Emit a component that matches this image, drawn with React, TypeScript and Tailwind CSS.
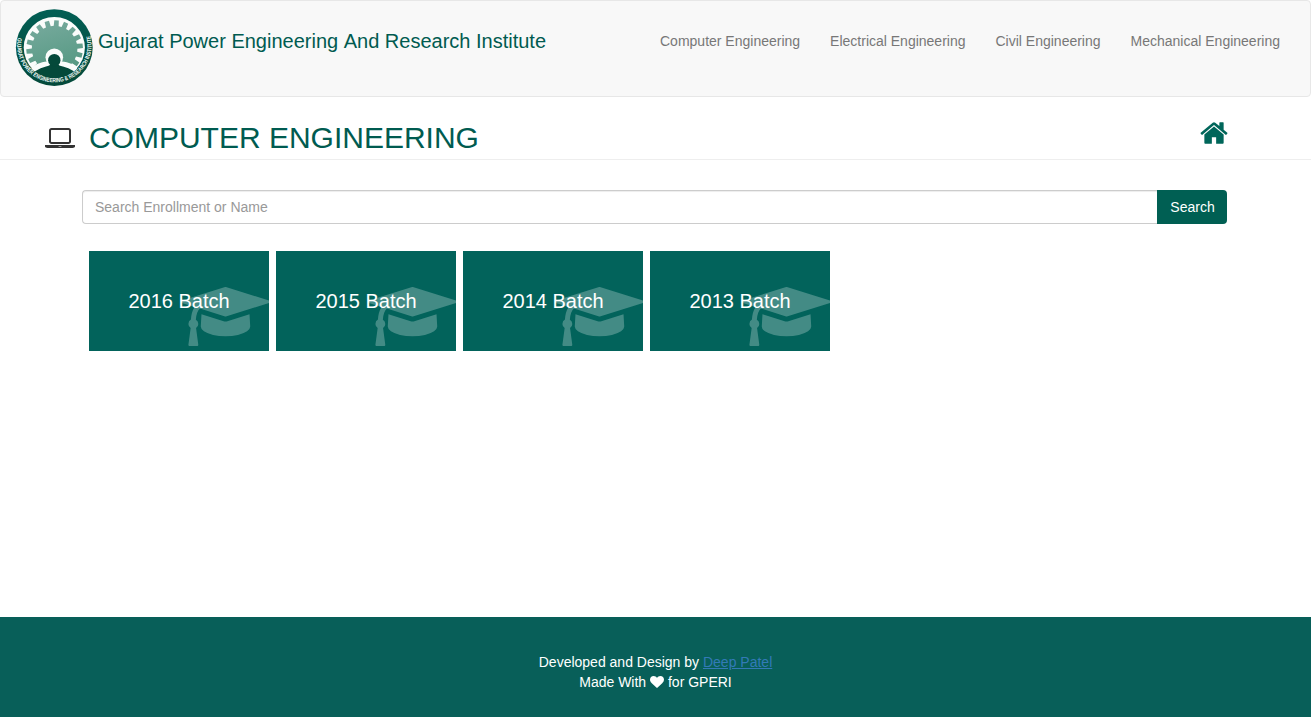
import React from "react";

const GREEN = "#00665a";

function gearPath(cx: number, cy: number, teeth: number, inner: number, outer: number, offset: number) {
  const step = 360 / teeth;
  const at = (r: number, deg: number) => {
    const a = ((deg - 90) * Math.PI) / 180;
    return `${(cx + r * Math.cos(a)).toFixed(2)} ${(cy + r * Math.sin(a)).toFixed(2)}`;
  };
  const points: string[] = [];
  for (let i = 0; i < teeth; i++) {
    const a = offset + i * step;
    points.push(at(inner, a - 6.2), at(outer, a - 4.6), at(outer, a + 4.6), at(inner, a + 6.2));
  }
  return `M${points.join("L")}Z`;
}

function Logo() {
  return (
    <svg viewBox="0 0 78 78" className="block h-[78px] w-[78px] overflow-visible" aria-label="GPERI">
      <defs>
        <linearGradient id="gear" x1="0" y1="0" x2="0.3" y2="1">
          <stop offset="0" stopColor="#79ab9f" />
          <stop offset="1" stopColor="#569983" />
        </linearGradient>
        <linearGradient id="ring" x1="0" y1="0" x2="0" y2="1">
          <stop offset="0" stopColor="#025f55" />
          <stop offset="1" stopColor="#04493a" />
        </linearGradient>
        <clipPath id="disc">
          <circle cx="39.3" cy="38.6" r="31" />
        </clipPath>
        <path id="rim" d="M3.4 26.4A37.2 37.2 0 1 0 75.2 26.4" />
      </defs>
      <circle cx="39.3" cy="38.6" r="38.4" fill="url(#ring)" />
      <circle cx="39.3" cy="38.6" r="30.6" fill="#fafcfb" />
      <g clipPath="url(#disc)">
        <path d={gearPath(39.6, 39.6, 18, 22.8, 28.4, 4)} fill="url(#gear)" />
        <path d="M8 66L21 55.5Q31 51 35 53L44 53Q48 51 58 55.5L71 66L60 78H14Z" fill="#fafcfb" />
        <circle cx="39.3" cy="48.3" r="8.8" fill="#fafcfb" />
        <path d="M12 70Q20 60 31 57.5Q35 57 36 54H42.5Q43.5 57 48 57.5Q59 60 67 70V78H12Z" fill="#04493a" />
      </g>
      <circle cx="39.3" cy="51.2" r="6.2" fill="#04493a" />
      <text
        fill="#f3faf7"
        fontSize="6"
        fontWeight="700"
        fontFamily="Liberation Sans, Arial, sans-serif"
      >
        <textPath href="#rim" startOffset="2.5" textLength="133.5" lengthAdjust="spacingAndGlyphs">
          GUJARAT POWER ENGINEERING &amp; RESEARCH INSTITUTE
        </textPath>
      </text>
    </svg>
  );
}

function LaptopIcon() {
  return (
    <svg viewBox="0 0 1920 1792" className="h-7 w-[30px]" fill="#333">
      <path d="M416 1280q-66 0-113-47t-47-113v-704q0-66 47-113t113-47h1088q66 0 113 47t47 113v704q0 66-47 113t-113 47h-1088zm-32-864v704q0 13 9.5 22.5t22.5 9.5h1088q13 0 22.5-9.5t9.5-22.5v-704q0-13-9.5-22.5t-22.5-9.5h-1088q-13 0-22.5 9.5t-9.5 22.5zm1376 928h160v96q0 40-47 68t-113 28h-1600q-66 0-113-28t-47-68v-96h1760zm-720 96q16 0 16-16t-16-16h-160q-16 0-16 16t16 16h160z" />
    </svg>
  );
}

function HomeIcon() {
  return (
    <svg viewBox="0 0 1792 1792" className="h-[30px] w-[30px]" fill={GREEN}>
      <path d="M1472 992v480q0 26-19 45t-45 19h-384v-384h-256v384h-384q-26 0-45-19t-19-45v-480q0-1 .5-3t.5-3l575-474 575 474q1 2 1 6zm223-69l-62 74q-8 9-21 11h-3q-13 0-21-7l-692-577-692 577q-12 8-24 7-13-2-21-11l-62-74q-8-10-7-23.5t11-21.5l719-599q32-26 76-26t76 26l244 204v-195q0-14 9-23t23-9h192q14 0 23 9t9 23v408l219 182q10 8 11 21.5t-7 23.5z" />
    </svg>
  );
}

function CapIcon() {
  return (
    <svg
      viewBox="0 0 2304 1792"
      preserveAspectRatio="none"
      className="absolute top-[31px] left-[92px] h-[69px] w-[89px]"
      fill="#fff"
      fillOpacity="0.26"
    >
      <path d="M1774 836l18 316q4 69-82 128t-235 93.5-323 34.5-323-34.5-235-93.5-82-128l18-316 574 181q22 7 48 7t48-7zm530-324q0 23-22 31l-1120 352q-4 1-10 1t-10-1l-652-206q-43 34-71 111.5t-34 178.5q63 36 63 109 0 69-58 107l58 433q2 14-8 25-9 11-24 11h-192q-15 0-24-11-10-11-8-25l58-433q-58-38-58-107 0-73 65-111 11-207 98-330l-333-104q-22-8-22-31t22-31l1120-352q4-1 10-1t10 1l1120 352q22 8 22 31z" />
    </svg>
  );
}

function HeartIcon() {
  return (
    <svg viewBox="0 0 1792 1792" className="inline-block h-[14px] w-[14px] align-[-2px]" fill="#fff">
      <path d="M896 1664q-26 0-44-18l-624-602q-10-8-27.5-26t-55.5-65.5-68-97.5-53.5-121-23.5-138q0-220 127-344t351-124q62 0 126.5 21.5t120 58 95.5 68.5 76 68q36-36 76-68t95.5-68.5 120-58 126.5-21.5q224 0 351 124t127 344q0 221-229 450l-623 600q-18 18-44 18z" />
    </svg>
  );
}

const departments = [
  "Computer Engineering",
  "Electrical Engineering",
  "Civil Engineering",
  "Mechanical Engineering",
];

const batches = ["2016 Batch", "2015 Batch", "2014 Batch", "2013 Batch"];

export default function App() {
  return (
    <div className="flex min-h-screen flex-col bg-white font-['Liberation_Sans',Arial,sans-serif] text-sm leading-5 text-[#333]">
      <nav className="flex h-[97px] items-start justify-between rounded border border-[#e7e7e7] bg-[#f8f8f8] pr-[15px] pl-[14px]">
        <div className="flex items-start">
          <div className="pt-2">
            <Logo />
          </div>
          <span className="ml-[5px] pt-[30px] text-xl leading-5 text-[#005b50]">
            Gujarat Power Engineering&nbsp;And Research Institute
          </span>
        </div>
        <ul className="flex pt-[15px]">
          {departments.map((name) => (
            <li key={name} className="p-[15px] text-[#777]">
              {name}
            </li>
          ))}
        </ul>
      </nav>

      <header className="flex h-[63px] items-start justify-between border-b border-[#eee] pr-[82px] pl-[45px]">
        <div className="flex items-start">
          <div className="pt-[27px]">
            <LaptopIcon />
          </div>
          <h1 className="ml-[13.9px] pt-6 text-3xl leading-[33px] text-[#005b50]">COMPUTER ENGINEERING</h1>
        </div>
        <div className="pt-[21px]">
          <HomeIcon />
        </div>
      </header>

      <main className="grow pt-[30px]">
        <form className="mr-[84px] ml-[82px] flex h-[34px]" onSubmit={(e) => e.preventDefault()}>
          <input
            type="text"
            placeholder="Search Enrollment or Name"
            className="h-[34px] min-w-0 grow rounded-l border border-r-0 border-[#ccc] bg-white px-3 py-1.5 text-sm shadow-[inset_0_1px_1px_rgba(0,0,0,0.075)] outline-none placeholder:text-[#999]"
          />
          <button type="submit" className="w-[70px] rounded-r bg-[#005f53] pl-px text-sm text-white">
            Search
          </button>
        </form>
        <div className="mt-[27px] ml-[89px] flex gap-[7px]">
          {batches.map((batch) => (
            <div
              key={batch}
              className="relative flex h-[100px] w-[180px] items-center justify-center overflow-hidden bg-[#02635b] text-xl text-white"
            >
              <span>{batch}</span>
              <CapIcon />
            </div>
          ))}
        </div>
      </main>

      <footer className="h-[100px] bg-[#085f59] pt-[35px] text-center text-white">
        <p>
          Developed and Design by{" "}
          <a href="#" className="text-[#337ab7] underline">
            Deep Patel
          </a>
        </p>
        <p>
          Made With <HeartIcon /> for GPERI
        </p>
      </footer>
    </div>
  );
}
